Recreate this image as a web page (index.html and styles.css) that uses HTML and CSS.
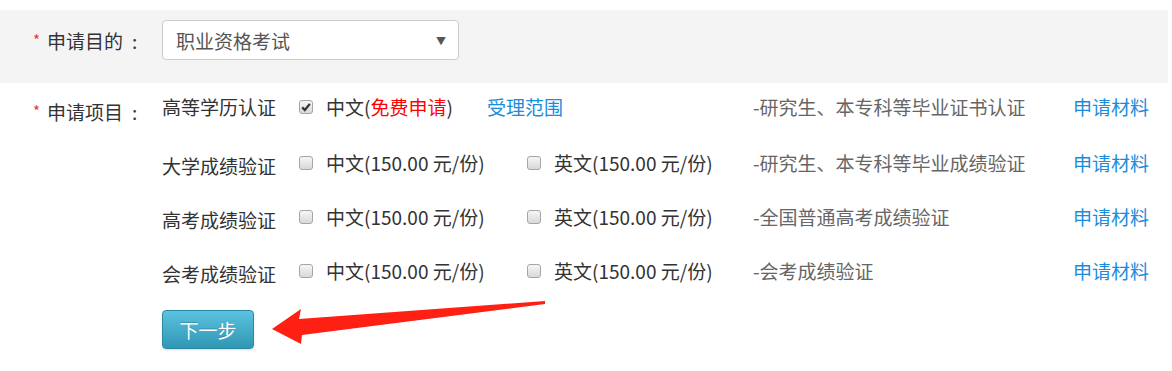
FILE: index.html
```html
<!DOCTYPE html>
<html lang="zh-CN">
<head>
    <meta charset="UTF-8">
    <meta name="viewport" content="width=device-width, initial-scale=1.0">
    <title>申请认证</title>
    <link rel="stylesheet" href="styles.css">
</head>
<body>
    <div class="page">
        <div class="form-row purpose">
            <label class="field-label"><span class="req">*</span>申请目的<span class="colon">:</span></label>
            <div class="select-box">
                <span>职业资格考试</span>
                <span class="caret">▼</span>
            </div>
        </div>

        <div class="form-row items-row">
            <label class="field-label items-label"><span class="req">*</span>申请项目<span class="colon">:</span></label>
            <div class="items">
                <div class="item first">
                    <span class="item-name">高等学历认证</span>
                    <span class="opt">
                        <span class="cb checked"><svg viewBox="0 0 14 14" width="14" height="14"><path d="M3.2 7.4 L5.8 10 L10.9 3.9" fill="none" stroke="#333" stroke-width="2.2"/></svg></span>
                        中文(<span class="free">免费申请</span>)
                        <a class="scope" href="#">受理范围</a>
                    </span>
                    <span class="opt"></span>
                    <span class="desc">-研究生、本专科等毕业证书认证</span>
                    <a class="link" href="#">申请材料</a>
                </div>
                <div class="item">
                    <span class="item-name">大学成绩验证</span>
                    <span class="opt"><span class="cb"></span>中文(150.00 元/份)</span>
                    <span class="opt"><span class="cb"></span>英文(150.00 元/份)</span>
                    <span class="desc">-研究生、本专科等毕业成绩验证</span>
                    <a class="link" href="#">申请材料</a>
                </div>
                <div class="item">
                    <span class="item-name">高考成绩验证</span>
                    <span class="opt"><span class="cb"></span>中文(150.00 元/份)</span>
                    <span class="opt"><span class="cb"></span>英文(150.00 元/份)</span>
                    <span class="desc">-全国普通高考成绩验证</span>
                    <a class="link" href="#">申请材料</a>
                </div>
                <div class="item">
                    <span class="item-name">会考成绩验证</span>
                    <span class="opt"><span class="cb"></span>中文(150.00 元/份)</span>
                    <span class="opt"><span class="cb"></span>英文(150.00 元/份)</span>
                    <span class="desc">-会考成绩验证</span>
                    <a class="link" href="#">申请材料</a>
                </div>
            </div>
        </div>

        <div class="actions">
            <button class="btn-next" type="button">下一步</button>
        </div>

        <!-- 标注箭头 -->
        <svg class="annot-arrow" width="1172" height="371" viewBox="0 0 1172 371">
            <polygon points="272,329 301,309 299,319 545,301 545,304 302,335 301,344" fill="#ff2014"/>
        </svg>
    </div>
</body>
</html>
```

FILE: styles.css
```css
body {
    margin: 0;
    font-family: "Noto Sans CJK SC", sans-serif;
    font-size: 19px;
    color: #333;
    background: #fff;
}
.page {
    position: relative;
    width: 1168px;
    height: 371px;
    padding-top: 10px;
    box-sizing: border-box;
}
.form-row {
    display: flex;
    align-items: flex-start;
}
.field-label {
    width: 162px;
    padding-left: 33px;
    box-sizing: border-box;
    line-height: 24px;
    color: #333;
    white-space: nowrap;
}
.colon {
    margin-left: 9px;
}
.req {
    color: #e4393c;
    font-size: 15px;
    margin-right: 7px;
    vertical-align: 3px;
}
.purpose {
    background: #f4f4f4;
    height: 73px;
    padding-top: 10px;
    box-sizing: border-box;
}
.purpose .field-label {
    padding-top: 8px;
}
.select-box {
    width: 297px;
    height: 40px;
    box-sizing: border-box;
    border: 1px solid #ccc;
    border-radius: 4px;
    background: #fff;
    display: flex;
    align-items: center;
    justify-content: space-between;
    padding: 0 12px 0 13px;
    color: #555;
}
.caret {
    font-size: 10px;
    color: #555;
}
.items-label {
    padding-top: 16px;
}
.item {
    display: grid;
    grid-template-columns: 137px 228px 226px 320px auto;
    align-items: center;
    height: 54px;
    line-height: 24px;
}
.item.first {
    height: 48px;
    margin-bottom: 5px;
}
.item-name {
    padding-top: 5px;
}
.item.first .item-name {
    padding-top: 0;
}
.opt {
    display: flex;
    align-items: center;
    white-space: nowrap;
}
.cb {
    width: 14px;
    height: 14px;
    box-sizing: border-box;
    border: 1px solid #a5a5a5;
    border-radius: 3px;
    background: linear-gradient(#f6f6f6, #d8d8d8);
    margin-right: 13px;
    display: inline-flex;
}
.cb svg {
    margin: -1px;
}
.free {
    color: #f00;
}
.scope {
    margin-left: 34px;
    color: #1a8cdc;
    text-decoration: none;
}
.desc {
    color: #666;
    white-space: nowrap;
}
.link {
    color: #1a8cdc;
    text-decoration: none;
    white-space: nowrap;
}
.actions {
    padding: 12px 0 0 162px;
}
.btn-next {
    width: 92px;
    height: 39px;
    border: 1px solid #2a8aa8;
    border-radius: 4px;
    background: linear-gradient(#5bc3e0, #2f96b4);
    color: #fff;
    font-family: "Noto Sans CJK SC", sans-serif;
    font-size: 19px;
    text-shadow: 0 -1px 0 rgba(0,0,0,0.2);
    box-shadow: 0 1px 2px rgba(0,0,0,0.15);
    padding: 0;
}
.annot-arrow {
    position: absolute;
    left: 0;
    top: 0;
    pointer-events: none;
}
```
